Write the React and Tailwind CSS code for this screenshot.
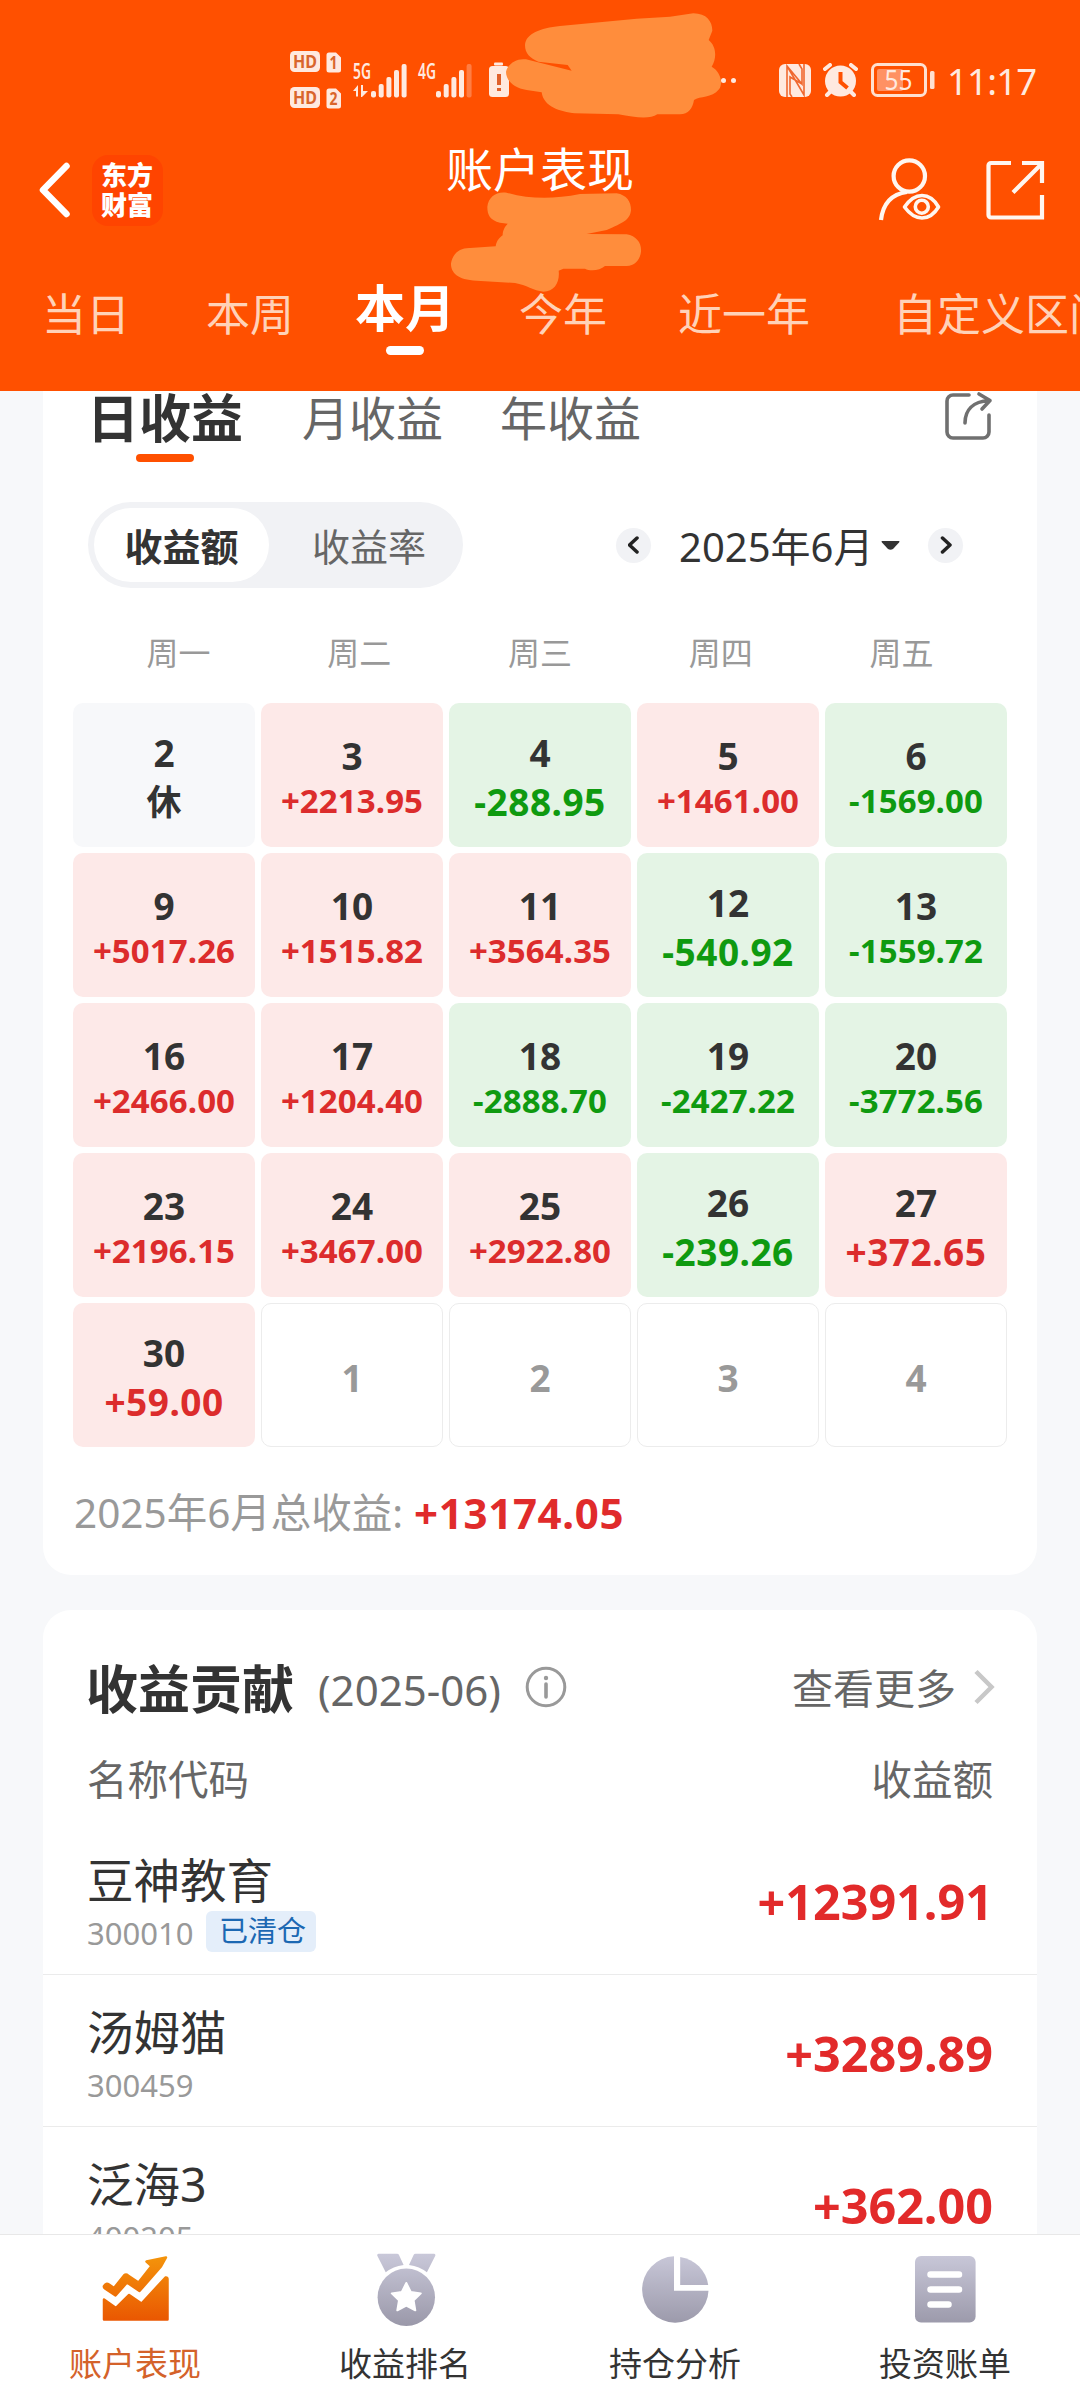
import { useState } from 'react'
import clsx from 'clsx'

const RANGES = [
  { label: '当日', space: 'ml-[42px]' },
  { label: '本周', space: 'ml-[76px]' },
  { label: '本月', space: 'ml-[61px]' },
  { label: '今年', space: 'ml-[64px]' },
  { label: '近一年', space: 'ml-[71px]' },
  { label: '自定义区间', space: 'ml-[83px]' },
]

const WEEKDAYS = ['周一', '周二', '周三', '周四', '周五']

const DAYS = [
  { day: 2, value: '休' },
  { day: 3, value: '+2213.95' },
  { day: 4, value: '-288.95' },
  { day: 5, value: '+1461.00' },
  { day: 6, value: '-1569.00' },
  { day: 9, value: '+5017.26' },
  { day: 10, value: '+1515.82' },
  { day: 11, value: '+3564.35' },
  { day: 12, value: '-540.92' },
  { day: 13, value: '-1559.72' },
  { day: 16, value: '+2466.00' },
  { day: 17, value: '+1204.40' },
  { day: 18, value: '-2888.70' },
  { day: 19, value: '-2427.22' },
  { day: 20, value: '-3772.56' },
  { day: 23, value: '+2196.15' },
  { day: 24, value: '+3467.00' },
  { day: 25, value: '+2922.80' },
  { day: 26, value: '-239.26' },
  { day: 27, value: '+372.65' },
  { day: 30, value: '+59.00' },
  { day: 1 },
  { day: 2 },
  { day: 3 },
  { day: 4 },
]

const STOCKS = [
  { name: '豆神教育', code: '300010', profit: '+12391.91', cleared: true },
  { name: '汤姆猫', code: '300459', profit: '+3289.89' },
  { name: '泛海3', code: '400205', profit: '+362.00' },
]

function SimBadge({ n }) {
  return (
    <svg className="overflow-visible" width="52" height="22" viewBox="0 0 52 22">
      <rect x="0" y="0" width="30" height="21" rx="4.5" fill="#ffe9df" />
      <text x="15" y="17" textAnchor="middle" fontSize="18.5" fontWeight="700" fill="#d9652c" textLength="24" lengthAdjust="spacingAndGlyphs">HD</text>
      <path d="M39 1.5h7l5 5V19a2.5 2.5 0 0 1-2.5 2.5H39A2.5 2.5 0 0 1 36.5 19V4A2.5 2.5 0 0 1 39 1.5z" fill="#ffe9df" />
      <text x="43.5" y="17.5" textAnchor="middle" fontSize="17" fontWeight="700" fill="#d9652c" textLength="8" lengthAdjust="spacingAndGlyphs">{n}</text>
    </svg>
  )
}

function Signal({ label, data, weak }) {
  return (
    <svg className="overflow-visible" width="54" height="35" viewBox="0 0 54 35" fill="#ffe9df">
      <text x="0" y="15.5" fontSize="21" fontWeight="600" textLength="18" lengthAdjust="spacingAndGlyphs">{label}</text>
      {data && <path d="M0 28l5-6v11.5H3V28zM8 22h2v6h5l-6 6H8z" />}
      <rect x="18" y="28" width="5" height="6.5" rx="2" />
      <rect x="25.7" y="21" width="5" height="13.5" rx="2" />
      <rect x="33.4" y="14" width="5" height="20.5" rx="2" />
      <rect x="41" y="7" width="5" height="27.5" rx="2" />
      <rect x="48.6" y="1" width="5" height="33.5" rx="2" opacity={weak ? 0.3 : 1} />
    </svg>
  )
}

function StatusBar() {
  return (
    <div className="flex h-[142px] items-center pt-[18px] pl-[290px] text-[#ffe9df]">
      <div className="flex flex-col gap-[14px]">
        <SimBadge n="1" />
        <SimBadge n="2" />
      </div>
      <div className="ml-[11px] flex">
        <Signal label="5G" data />
        <div className="ml-[11px]">
          <Signal label="4G" weak />
        </div>
      </div>
      <svg className="ml-[17px]" width="20" height="36" viewBox="0 0 20 36">
        <rect x="5" y="0.5" width="9" height="3" rx="1" fill="#ffe9df" />
        <rect x="0" y="4" width="20" height="31" rx="3.5" fill="#ffe9df" />
        <path d="M10 12v11M10 26v3" stroke="#e0602a" strokeWidth="4" />
      </svg>
      <div className="ml-[212px] flex gap-[5px]">
        <span className="h-[5px] w-[5px] rounded-full bg-[#ffe9df]" />
        <span className="h-[5px] w-[5px] rounded-full bg-[#ffe9df]" />
      </div>
      <svg className="ml-[43px]" width="32" height="33" viewBox="0 0 32 33">
        <rect width="32" height="33" rx="6" fill="#ffe9df" />
        <path d="M8 33V2L23 20V5L20 0M23 20L11 13V30L13 33M8 2L25 31V0" fill="none" stroke="#f0682f" strokeWidth="1.6" />
      </svg>
      <svg className="ml-[12px]" width="35" height="34" viewBox="0 0 35 34">
        <path d="M2 6l5-4M33 6l-5-4M8 28l-4 4M27 28l4 4" stroke="#ffe9df" strokeWidth="4" strokeLinecap="round" />
        <circle cx="17.5" cy="18" r="15.5" fill="#ffe9df" />
        <path d="M17.5 9v10l7 6" fill="none" stroke="#ff5000" strokeWidth="4" />
      </svg>
      <svg className="ml-[13px] overflow-visible" width="64" height="34" viewBox="0 0 64 34">
        <rect x="1.5" y="1.5" width="53" height="31" rx="5" fill="none" stroke="#ffe0d0" strokeWidth="3" />
        <rect x="6" y="6" width="26" height="22" rx="2" fill="#ff9163" />
        <text x="27.5" y="26.5" textAnchor="middle" fontSize="27" fill="#ffe9df" textLength="28" lengthAdjust="spacingAndGlyphs">55</text>
        <rect x="59" y="8" width="4.5" height="18" rx="1.5" fill="#ffe0d0" />
      </svg>
      <span className="ml-[12px] pt-px text-[36.5px] leading-[40px] tracking-[-0.8px]">11:17</span>
    </div>
  )
}

// hand-drawn marks hiding the network speed and the account number
function Scribbles() {
  return (
    <svg className="absolute top-0 left-[270px]" width="470" height="300" viewBox="0 0 1410 900" fill="#ff8d3c">
      <path d="M765 135C768 100 810 85 870 78L1100 56 1200 50 1270 40C1310 40 1327 65 1327 92L1316 120C1338 138 1342 172 1325 200C1352 215 1360 250 1347 268C1325 295 1290 288 1272 300C1268 325 1255 343 1230 343L1162 343C1140 358 1100 354 1045 343L915 340C870 335 820 320 815 277L770 270C730 265 708 240 708 215C715 190 740 174 768 178L905 212 893 195 805 185C780 175 765 160 765 135z" />
      <path d="M652 620C655 590 680 573 710 578C780 598 850 598 930 582L1040 580C1070 585 1083 605 1083 630C1080 660 1060 668 1010 690L950 702 1070 703C1100 708 1115 730 1113 755C1110 780 1095 797 1070 798L1005 798C990 812 960 814 945 806L880 806 866 812C870 845 855 875 820 875C790 872 770 855 735 849L620 842C560 840 542 815 543 790C548 760 570 743 600 744L677 739C680 720 690 712 698 706C698 690 705 680 713 671L690 668C660 660 652 645 652 620z" />
    </svg>
  )
}

function NavBar() {
  return (
    <div className="flex h-24 items-center">
      <svg className="ml-[35px]" width="36" height="56" viewBox="0 0 36 56" fill="none" stroke="#fff" strokeWidth="6.5">
        <path d="M31.5 4L8 28l23.5 24" strokeLinecap="round" strokeLinejoin="round" />
      </svg>
      <div className="ml-[21px] flex h-[71px] w-[71px] flex-col items-center justify-center rounded-2xl bg-[#ff4400] pr-px text-[26px] leading-[30px] font-black text-white">
        <span>东方</span>
        <span>财富</span>
      </div>
      <h1 className="ml-[283px] h-full w-[188px] text-[47px] leading-[55px] whitespace-nowrap text-white">账户表现</h1>
      <svg className="ml-[243px]" width="66" height="66" viewBox="0 0 66 66" fill="none" stroke="#fff6f0" strokeWidth="4.2">
        <circle cx="32.3" cy="19" r="15.7" />
        <path d="M4 63C6 46 15 37 30 35" />
        <path d="M27.5 50C33 42 39 38.5 45 38.5S57 42 61.5 50C57 57.5 51 61 45 61S33 57.5 27.5 50z" strokeWidth="3.6" strokeLinejoin="round" />
        <circle cx="44.8" cy="49.7" r="6.5" strokeWidth="3.6" />
      </svg>
      <svg className="ml-[42px]" width="62" height="62" viewBox="0 0 62 62" fill="none" stroke="#fff6f0" strokeWidth="4.2">
        <path d="M26 4H6a2.5 2.5 0 0 0-2.5 2.5V56A2.5 2.5 0 0 0 6 58.5H57V36" />
        <path d="M37 4H57V24M28 33.5L57 4.5" />
      </svg>
    </div>
  )
}

function RangeTabs() {
  const [active, setActive] = useState('本月')
  return (
    <div className="flex h-[153px] overflow-hidden pt-[42px]">
      {RANGES.map(({ label, space }) => (
        <button
          key={label}
          onClick={() => setActive(label)}
          className={clsx(
            'flex shrink-0 flex-col items-center whitespace-nowrap',
            space,
            label === active ? 'text-[50px] leading-[56px] font-bold text-white' : 'pt-[6px] text-[44px] leading-[56px] text-[#ffd2b8]'
          )}
        >
          {label}
          {label === active && <span className="mt-[10px] h-[9px] w-[38px] rounded-full bg-white" />}
        </button>
      ))}
    </div>
  )
}

function DayCell({ day, value }) {
  if (!value) {
    return (
      <div className="flex h-36 items-center justify-center rounded-[10px] border border-[#ececec] pt-[5px] text-[37px] leading-none font-bold text-[#999]">
        {day}
      </div>
    )
  }
  const small = value.length > 7
  const up = value.startsWith('+')
  const down = value.startsWith('-')
  return (
    <div
      className={clsx(
        'flex h-36 flex-col items-center rounded-[10px] font-bold',
        small ? 'pt-[31px]' : 'pt-[28px]',
        up && 'bg-[#fde9e8]',
        down && 'bg-[#e4f4e5]',
        !up && !down && 'bg-[#f7f8fa]'
      )}
    >
      <span className="text-[37px] leading-[44px] text-[#333]">{day}</span>
      <span
        className={clsx(
          small && 'text-[33px] leading-[46px] tracking-[0.1px]',
          !small && (up || down) && 'mt-[3px] text-[37px] leading-[48px] tracking-[0.5px]',
          !up && !down && 'mt-[3px] text-[35px] leading-[48px] text-[#333]',
          up && 'text-[#dc2c2c]',
          down && 'text-[#0f9a10]'
        )}
      >
        {value}
      </span>
    </div>
  )
}

function RoundArrow({ next }) {
  return (
    <button className="flex h-[35px] w-[35px] items-center justify-center rounded-full bg-[#f1f2f5]">
      <svg width="12" height="20" viewBox="0 0 12 20" fill="none" stroke="#222" strokeWidth="3.5" strokeLinecap="round" strokeLinejoin="round">
        <path d={next ? 'M2.5 3l7.5 7-7.500 7' : 'M9 3L1.500 10 9 17'} />
      </svg>
    </button>
  )
}

function CalendarCard() {
  return (
    <section className="mx-[43px] h-[1184px] rounded-b-[28px] bg-white">
      <div className="flex pl-[44px] text-[47px] leading-[54px] text-[#666]">
        <div className="flex w-[156px] flex-col items-center">
          <span className="text-[52px] font-bold text-[#333]">日收益</span>
          <span className="mt-[9px] h-2 w-[58px] rounded-full bg-[#ff5000]" />
        </div>
        <span className="ml-[59px]">月收益</span>
        <span className="ml-[57px]">年收益</span>
        <svg className="ml-[302px]" width="52" height="52" viewBox="0 0 52 52" fill="none" stroke="#707070" strokeWidth="3.6">
          <path d="M26 4H10a6 6 0 0 0-6 6V41a6 6 0 0 0 6 6H40a6 6 0 0 0 6-6V24" strokeLinecap="round" />
          <path d="M22 32C22 19 30 10.5 46 9.5M36 3l11 6.5L39 18" strokeLinecap="round" strokeLinejoin="round" />
        </svg>
      </div>

      <div className="mt-[40px] flex h-[86px] items-center pl-[45px]">
        <div className="flex h-full w-[375px] items-center rounded-full bg-[#f1f2f5] pl-[6px] text-[38px] text-[#666]">
          <span className="flex h-[74px] w-[175px] items-center justify-center rounded-full bg-white pt-[2px] font-bold text-[#333]">收益额</span>
          <span className="ml-[43px] pt-[2px]">收益率</span>
        </div>
        <div className="ml-[153px] flex items-center">
          <RoundArrow />
          <span className="ml-[28px] flex w-[194px] pt-[4px] text-[40px] leading-[50px] whitespace-nowrap text-[#333]">2025年6月</span>
          <svg className="ml-[8px]" width="19" height="9" viewBox="0 0 19 9">
            <path d="M1 0H18Q19 0 18 1.5L12 8Q9.5 9.5 7 8L1 1.5Q0 0 1 0z" fill="#333" />
          </svg>
          <div className="ml-[28px]">
            <RoundArrow next />
          </div>
        </div>
      </div>

      <div className="mx-[45px] mt-[43px] grid grid-cols-5 text-center text-[32px] leading-[44px] text-[#999]">
        {WEEKDAYS.map((w) => (
          <span key={w}>{w}</span>
        ))}
      </div>

      <div className="mx-[30px] mt-[28px] grid grid-cols-5 gap-[6px]">
        {DAYS.map((d, i) => (
          <DayCell key={i} {...d} />
        ))}
      </div>

      <div className="mt-[38px] flex items-center pl-[31px] text-[40.5px] leading-[56px] text-[#999]">
        <span className="w-[340px] whitespace-nowrap">2025年6月总收益:</span>
        <span className="text-[42px] font-bold tracking-[0.7px] text-[#e02b2b]">+13174.05</span>
      </div>
    </section>
  )
}

function StockRow({ name, code, profit, cleared }) {
  return (
    <div className="flex h-[151.8px] justify-between border-b border-[#ebebeb] px-[44px]">
      <div className="pt-[29px]">
        <div className="text-[46.5px] leading-[56px] text-[#333]">{name}</div>
        <div className="flex h-[46px] items-center text-[31px] leading-[46px] text-[#999]">
          <span className="w-[110px] pt-[4px]">{code}</span>
          {cleared && (
            <span className="ml-[9px] flex h-[41px] w-[110px] items-center justify-center rounded-md bg-[#e4eefa] pl-[3px] text-[29px] text-[#1c68b3]">已清仓</span>
          )}
        </div>
      </div>
      <span className="pt-[48px] text-[48.5px] leading-[60px] font-bold text-[#e22a2a]">{profit}</span>
    </div>
  )
}

function ContributionCard() {
  return (
    <section className="mx-[43px] mt-[35px] rounded-t-[28px] bg-white pt-[49px]">
      <div className="flex h-[60px] items-center pr-[42px] pl-[43px] text-[41px] text-[#666]">
        <h2 className="text-[52px] leading-[60px] font-bold text-[#333]">收益贡献</h2>
        <span className="ml-[24px] w-[184px] text-[42px]">(2025-06)</span>
        <svg className="-mt-[4px] ml-[23px]" width="42" height="42" viewBox="0 0 42 42" fill="none" stroke="#999" strokeWidth="3">
          <circle cx="21" cy="21" r="18.8" />
          <path d="M21 18v13" strokeWidth="3.6" strokeLinecap="round" />
          <circle cx="21" cy="12" r="2.2" fill="#999" stroke="none" />
        </svg>
        <span className="ml-auto">查看更多</span>
        <svg className="-mt-[4px] ml-[17px]" width="22" height="36" viewBox="0 0 22 36" fill="none" stroke="#c8c8c8" strokeWidth="4.5">
          <path d="M3 2.5L18.5 18 3 33.5" />
        </svg>
      </div>
      <div className="mt-[33px] flex h-[56px] justify-between px-[44px] text-[40.5px] leading-[56px] text-[#666]">
        <span>名称代码</span>
        <span>收益额</span>
      </div>
      <div className="mt-[15px]">
        {STOCKS.map((s) => (
          <StockRow key={s.code} {...s} />
        ))}
      </div>
    </section>
  )
}

function ChartIcon() {
  return (
    <svg width="80" height="80" viewBox="0 0 80 80">
      <defs>
        <linearGradient id="hot" x1="0" y1="0" x2="0" y2="80" gradientUnits="userSpaceOnUse">
          <stop offset="0" stopColor="#f59a0c" />
          <stop offset="1" stopColor="#e84e00" />
        </linearGradient>
      </defs>
      <g fill="url(#hot)" stroke="url(#hot)" strokeWidth="2.5" strokeLinejoin="round">
        <path d="M9 49.5L21 58 34.1 45 46.5 53.5 70.5 27.5Q72.5 27 72.5 29V69.5H9z" />
        <path d="M9 36Q11 32.5 14 34.5L19 38 29 25.5Q31 23.5 33 25.5L43.5 32.5 56.5 16 51.5 11.5 71 7.5 66 16.5 44.5 41 32 32.5 20.5 45.5 10 38.5Q8.5 37.5 9 36z" />
      </g>
    </svg>
  )
}

function GreyGradient({ id }) {
  return (
    <defs>
      <linearGradient id={id} x1="0" y1="4" x2="0" y2="76" gradientUnits="userSpaceOnUse">
        <stop offset="0" stopColor="#c9c8d9" />
        <stop offset="1" stopColor="#9a98a9" />
      </linearGradient>
    </defs>
  )
}

function MedalIcon() {
  return (
    <svg width="80" height="80" viewBox="0 0 80 80">
      <GreyGradient id="medal" />
      <g fill="url(#medal)">
        <path d="M13.5 3.7H32Q33.5 3.7 34 5L38.6 15Q28 16.5 20.7 22.3L12.2 5.5Q12 3.7 13.5 3.7z" />
        <path d="M69.1 3.7H50.6Q49.1 3.7 48.6 5L44 15Q54.6 16.5 61.9 22.3L70.4 5.5Q70.6 3.7 69.1 3.7z" />
        <circle cx="41.3" cy="47.3" r="28.7" />
      </g>
      <path d="M41.3 33l4.500 9 10 1.400-7.200 7 1.700 9.900-9-4.700-9 4.700 1.700-9.900-7.200-7 10-1.400z" fill="#fff" stroke="#fff" strokeWidth="2" strokeLinejoin="round" />
    </svg>
  )
}

function PieIcon() {
  return (
    <svg width="80" height="80" viewBox="0 0 80 80">
      <GreyGradient id="pie" />
      <g fill="url(#pie)">
        <path d="M39 6.3V40.7H73.5A33.2 33.2 0 1 1 39 6.3z" />
        <path d="M45.2 6.9V35H73.2A33.2 33.2 0 0 0 45.2 6.9z" />
      </g>
    </svg>
  )
}

function BillIcon() {
  return (
    <svg width="80" height="80" viewBox="0 0 80 80">
      <GreyGradient id="bill" />
      <rect x="10" y="6" width="60.6" height="66.5" rx="6" fill="url(#bill)" />
      <path d="M25.5 24.5H54M25.5 39.5H54M25.5 54.5H43.5" stroke="#fff" strokeWidth="6.5" strokeLinecap="round" />
    </svg>
  )
}

const NAV = [
  { label: '账户表现', Icon: ChartIcon, active: true },
  { label: '收益排名', Icon: MedalIcon },
  { label: '持仓分析', Icon: PieIcon },
  { label: '投资账单', Icon: BillIcon },
]

function BottomNav() {
  return (
    <nav className="grid h-[166px] grid-cols-4 border-t border-[#e8e8e8] bg-white">
      {NAV.map(({ label, Icon, active }) => (
        <a key={label} className={clsx('flex flex-col items-center pt-[15px] text-[33px] leading-[44px]', active ? 'text-[#d4622a]' : 'text-[#333]')}>
          <Icon />
          <span className="mt-[12px]">{label}</span>
        </a>
      ))}
    </nav>
  )
}

export default function App() {
  return (
    <div className="relative flex h-[2400px] w-[1080px] flex-col overflow-hidden bg-[#f7f8fa] font-['Noto_Sans','Noto_Sans_CJK_SC',sans-serif]">
      <header className="h-[391px] shrink-0 bg-[#ff5000]">
        <StatusBar />
        <NavBar />
        <RangeTabs />
      </header>
      <main className="h-[1843px] shrink-0 overflow-hidden">
        <CalendarCard />
        <ContributionCard />
      </main>
      <BottomNav />
      <Scribbles />
    </div>
  )
}
